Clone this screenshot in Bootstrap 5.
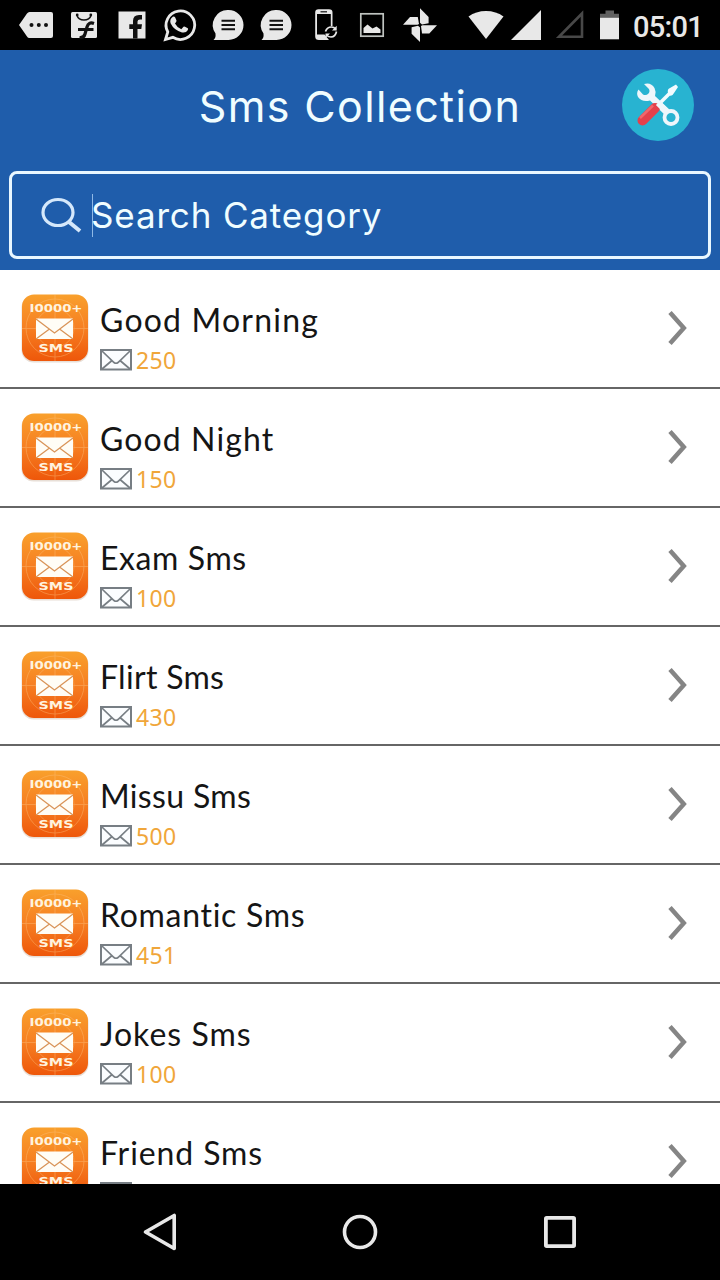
<!DOCTYPE html>
<html lang="en">
<head>
<meta charset="utf-8">
<meta name="viewport" content="width=device-width, initial-scale=1">
<title>Sms Collection</title>
<link href="https://cdn.jsdelivr.net/npm/bootstrap@5.3.0/dist/css/bootstrap.min.css" rel="stylesheet">
<style>
  body { width: 720px; height: 1280px; background: #fff; }
  svg { display: block; flex: none; }
  .status-bar { height: 50px; color: #e8e8e8; padding-left: 12px; }
  .clock { font: 500 29px/50px Roboto, sans-serif; width: 87px; padding-top: 2px; letter-spacing: -.7px; white-space: nowrap; }
  .app-header { height: 220px; background: #1f5dab; color: #f0fdff; font-family: Inter, sans-serif; }
  .title-row { height: 110px; }
  .app-title { font-size: 43px; line-height: 50px; font-weight: 400; letter-spacing: 1.35px; white-space: nowrap; padding-top: 1px; }
  .search-box { height: 88px; margin: 11px 9px 0; border: 3px solid #e9f7ff; border-radius: 8px; padding-left: 28px; }
  .caret { width: 1px; height: 43px; background: #8fb9e6; margin-left: 10px; margin-right: -2px; }
  .search-hint { font-size: 35px; line-height: 44px; letter-spacing: .85px; white-space: nowrap; }
  .sms-row { height: 119px; border-bottom: 2px solid #666; padding: 0 32px 2px 20px; }
  .sms-text { margin-left: 10px; margin-top: 30px; }
  .sms-name { font: 400 32px/40px Lato, sans-serif; color: #151515; white-space: nowrap; }
  .sms-count { font: 400 23px/30px "Noto Sans", sans-serif; color: #f0a63a; letter-spacing: .4px; }
  .sms-total { height: 30px; margin-top: 5px; }
  .nav-keys { height: 96px; }
</style>
</head>
<body class="d-flex flex-column overflow-hidden">

<svg width="0" height="0" class="position-absolute" aria-hidden="true">
  <defs>
    <linearGradient id="tile" x1="0" y1="0" x2="0" y2="1"><stop offset="0" stop-color="#f9a02c"/><stop offset=".5" stop-color="#f67f22"/><stop offset="1" stop-color="#ee570a"/></linearGradient>
    <symbol id="app-icon" viewBox="0 0 70 70">
      <rect x="1.500" y="2.500" width="67" height="67" rx="12" fill="#d9c9bd" opacity=".6"/>
      <rect x="2" y="1.500" width="66" height="66.500" rx="12" fill="url(#tile)"/>
      <g fill="none" stroke="#ffc27d" stroke-width=".9" opacity=".45"><circle cx="35" cy="35" r="29"/><circle cx="35" cy="35" r="19"/><path d="M2 35.500H68M35 2V68"/></g>
      <text x="9.500" y="19.200" font-family="DejaVu Sans" font-weight="bold" font-size="10" fill="#fff3df" textLength="53" lengthAdjust="spacingAndGlyphs">I0000+</text>
      <rect x="16" y="25.500" width="37" height="20.500" fill="#fffdf6"/>
      <path d="M16 26L34.500 40L53 26M16 46L29.500 36M53 46L39.500 36" fill="none" stroke="#d99458" stroke-width="1.300"/>
      <text x="18.500" y="59" font-family="DejaVu Sans" font-weight="bold" font-size="11" fill="#fff3df" textLength="35" lengthAdjust="spacingAndGlyphs">SMS</text>
    </symbol>
    <symbol id="mail" viewBox="0 0 32 22">
      <g fill="none" stroke="#777e84"><rect x="1" y="1" width="30" height="19.500" stroke-width="2" fill="#fbfdff"/><path d="M2 2L14 13.500Q16 15 18 13.500L30 2M2 20L12 11.500M30 20L20 11.500" stroke-width="1.700"/></g>
    </symbol>
    <symbol id="chevron" viewBox="0 0 20 36">
      <path d="M2 2.500L15.800 18L2 33.500" fill="none" stroke="#858585" stroke-width="4.500"/>
    </symbol>
    <symbol id="chat" viewBox="204 0 48 50">
      <path d="M228.500 10A15 15 0 1 1 228.500 40H213.500Q216 38 215.500 33.500A15 15 0 0 1 228.500 10Z" fill="#e8e8e8"/>
      <path d="M221.500 20.800H235M221.500 25H235M221.500 29.300H235" stroke="#111" stroke-width="2"/>
    </symbol>
  </defs>
</svg>

<header class="status-bar bg-black d-flex flex-shrink-0">
  <svg width="48" height="50" viewBox="12 0 48 50"><path d="M29.500 12H51Q53 12 53 14V36Q53 38 51 38H29.500Q27.800 38 27 36.500L19 25L27 13.500Q28 12 29.500 12Z" fill="currentColor"/><g fill="#111"><circle cx="31.500" cy="25" r="2"/><circle cx="38.800" cy="25" r="2"/><circle cx="46" cy="25" r="2"/></g></svg>
  <svg width="48" height="50" viewBox="60 0 48 50"><rect x="71" y="12" width="26" height="26" rx="1.500" fill="currentColor"/><g fill="none" stroke="#111"><path d="M77 15.500Q78.500 20 84 20Q89.500 20 91 15.500" stroke-width="1.500"/><path d="M94 23.500Q88.500 21.500 87 27L85 34Q84 38 79.500 37.500M78 29.500H93.500" stroke-width="3.200"/></g><g fill="#111"><circle cx="77.200" cy="15" r="1.400"/><circle cx="90.800" cy="15" r="1.400"/></g></svg>
  <svg width="48" height="50" viewBox="108 0 48 50"><rect x="118.500" y="11.500" width="27" height="27" fill="currentColor"/><path d="M133 38.500V29H129.300V24.300H133V21Q133 15 139 15H142V19.500H140Q137.500 19.500 137.500 21.500V24.300H142L141.300 29H137.500V38.500Z" fill="#111"/></svg>
  <svg width="48" height="50" viewBox="157.500 0.500 48 50"><path d="M167 40L169.300 32.500A14.300 14.300 0 1 1 174.300 37.800Z" fill="none" stroke="currentColor" stroke-width="2.800"/><path d="M174.300 17.200Q175.800 16.500 176.700 18L178 21Q178.300 22 176.500 24Q178.500 28 182.800 29.700L185 27.300Q185.500 26.800 186.500 27.300L189.300 28.700Q190 29.200 189.200 30.800Q187.500 33.700 183.500 32.900Q175.500 30.800 172.200 24Q170.700 20 174.300 17.200Z" fill="currentColor"/></svg>
  <svg width="48" height="50"><use href="#chat"/></svg>
  <svg width="48" height="50"><use href="#chat"/></svg>
  <svg width="48" height="50" viewBox="300 0 48 50"><path fill-rule="evenodd" d="M318.500 9.300H329Q332.500 9.300 332.500 12.500V26H330.800V14H317V34.500H324.500L327 37.500L329 40H319Q315.200 40 315.200 36.500V12.500Q315.200 9.300 318.500 9.300Z" fill="currentColor"/><path d="M320.500 11.800H327" stroke="#111" stroke-width="1.200"/><path d="M325.500 31.500Q327 27 331.500 27Q334 27 335.500 29M336.500 31.500Q335.500 36.800 331 37Q328.500 37 327 35.500" fill="none" stroke="currentColor" stroke-width="1.700"/><path d="M336.700 25.800V30.500H332ZM325.500 33.500H330L325.500 38Z" fill="currentColor"/></svg>
  <svg width="48" height="50" viewBox="348 0 48 50"><rect x="360.800" y="13.800" width="22.400" height="22.400" fill="none" stroke="#bfc3c0" stroke-width="1.700"/><path d="M363.500 33V28L367.500 24.500L372.500 28.500L376.500 26.500L380.500 29.500V33Z" fill="currentColor"/></svg>
  <svg width="48" height="50" viewBox="396 0 48 50"><g fill="currentColor"><path d="M420 8.300L428.600 17V23.200L422 24.500L420 22.700Z"/><path d="M437 25.200L429.300 33.500H422L421 26L422.500 25.200Z"/><path d="M420 42L411.600 33.700V27.200L418 25.700L420 27.500Z"/><path d="M403 24.700L410 17H417.800L419 24L417.500 24.700Z"/></g></svg>
  <div class="d-flex ms-auto">
    <svg width="177" height="50" viewBox="456 0 177 50"><path d="M486 39L468.500 16.500Q476 11 486 11Q496 11 503.500 16.500Z" fill="currentColor"/><path d="M541 10V40H511Z" fill="currentColor"/><path d="M582 13.500V36.800H559Z" fill="none" stroke="#484848" stroke-width="2.600"/><path d="M600 18V13.800H605.500V10.500H614V13.800H619V18Z" fill="#606060"/><rect x="600" y="17.800" width="19" height="21.500" fill="currentColor"/></svg>
    <div class="clock">05:01</div>
  </div>
</header>

<section class="app-header flex-shrink-0">
  <div class="title-row position-relative d-flex align-items-center justify-content-center">
    <h1 class="app-title mb-0">Sms Collection</h1>
    <svg class="position-absolute end-0 me-4" width="76" height="76" viewBox="620 67 76 76">
      <circle cx="658" cy="105" r="36" fill="#28b3d1"/>
      <path d="M659 104L673 90" stroke="#f2fbff" stroke-width="3.600"/>
      <path d="M668 93Q667 89 670 88L676 84.500L678 87L674 93Q672 97 669 95Z" fill="#f2fbff"/>
      <path d="M644 84Q651 82 654.500 88Q656.500 92 655 96L671 111L666 116L650 100.500Q642 102.500 638 97Q636 93 638.500 89.500L643 94.500Q646 96 648.500 93.500Q650.500 91 648.500 88.500Z" fill="#eef6fb"/>
      <path d="M642.500 120.500L655 108" stroke="#e4404b" stroke-width="10" stroke-linecap="round"/>
      <path d="M640 118L653 105.500" stroke="#f0666c" stroke-width="2.500"/>
      <path d="M658 103L668 113" stroke="#eef6fb" stroke-width="6"/>
      <circle cx="671" cy="117.500" r="6.500" fill="#28b3d1" stroke="#eef6fb" stroke-width="3.800"/>
    </svg>
  </div>
  <div class="search-box d-flex align-items-center">
    <svg width="42" height="40" viewBox="40 195 42 40"><ellipse cx="58" cy="212.500" rx="15" ry="13" fill="none" stroke="#d5e8fb" stroke-width="3.200"/><path d="M69 222L80 231" stroke="#d5e8fb" stroke-width="4"/></svg>
    <span class="caret"></span>
    <span class="search-hint">Search Category</span>
  </div>
</section>

<main id="categories" class="flex-grow-1 overflow-hidden"></main>

<footer class="nav-keys bg-black d-flex justify-content-center flex-shrink-0">
  <svg width="200" height="96" viewBox="60 1184 200 96"><path d="M174.200 1215.500V1248.500L145.500 1232Z" fill="none" stroke="#e8e8e8" stroke-width="3.600" stroke-linejoin="round"/></svg>
  <svg width="200" height="96" viewBox="260 1184 200 96"><circle cx="360" cy="1232" r="15.500" fill="none" stroke="#e8e8e8" stroke-width="3.600"/></svg>
  <svg width="200" height="96" viewBox="460 1184 200 96"><rect x="545.900" y="1217.900" width="28.200" height="28.200" rx=".8" fill="none" stroke="#e8e8e8" stroke-width="3.800" stroke-linejoin="round"/></svg>
</footer>

<script>
  // name, message total, letter tracking of the name in px
  const categories = [["Good Morning", 250, 1.2], ["Good Night", 150, 1.1], ["Exam Sms", 100, .6], ["Flirt Sms", 430, .3],
    ["Missu Sms", 500, .35], ["Romantic Sms", 451, .7], ["Jokes Sms", 100, 1], ["Friend Sms", "", .9]];
  document.getElementById("categories").innerHTML = categories.map(([name, count, tracking]) => `
    <div class="sms-row d-flex align-items-center">
      <svg width="70" height="70"><use href="#app-icon"/></svg>
      <div class="sms-text align-self-start flex-grow-1">
        <div class="sms-name" style="letter-spacing:${tracking}px">${name}</div>
        <div class="sms-total d-flex align-items-center gap-1">
          <svg width="32" height="22"><use href="#mail"/></svg>
          <span class="sms-count">${count}</span>
        </div>
      </div>
      <svg width="20" height="36"><use href="#chevron"/></svg>
    </div>`).join("");
</script>
<script src="https://cdn.jsdelivr.net/npm/bootstrap@5.3.0/dist/js/bootstrap.bundle.min.js"></script>
</body>
</html>
